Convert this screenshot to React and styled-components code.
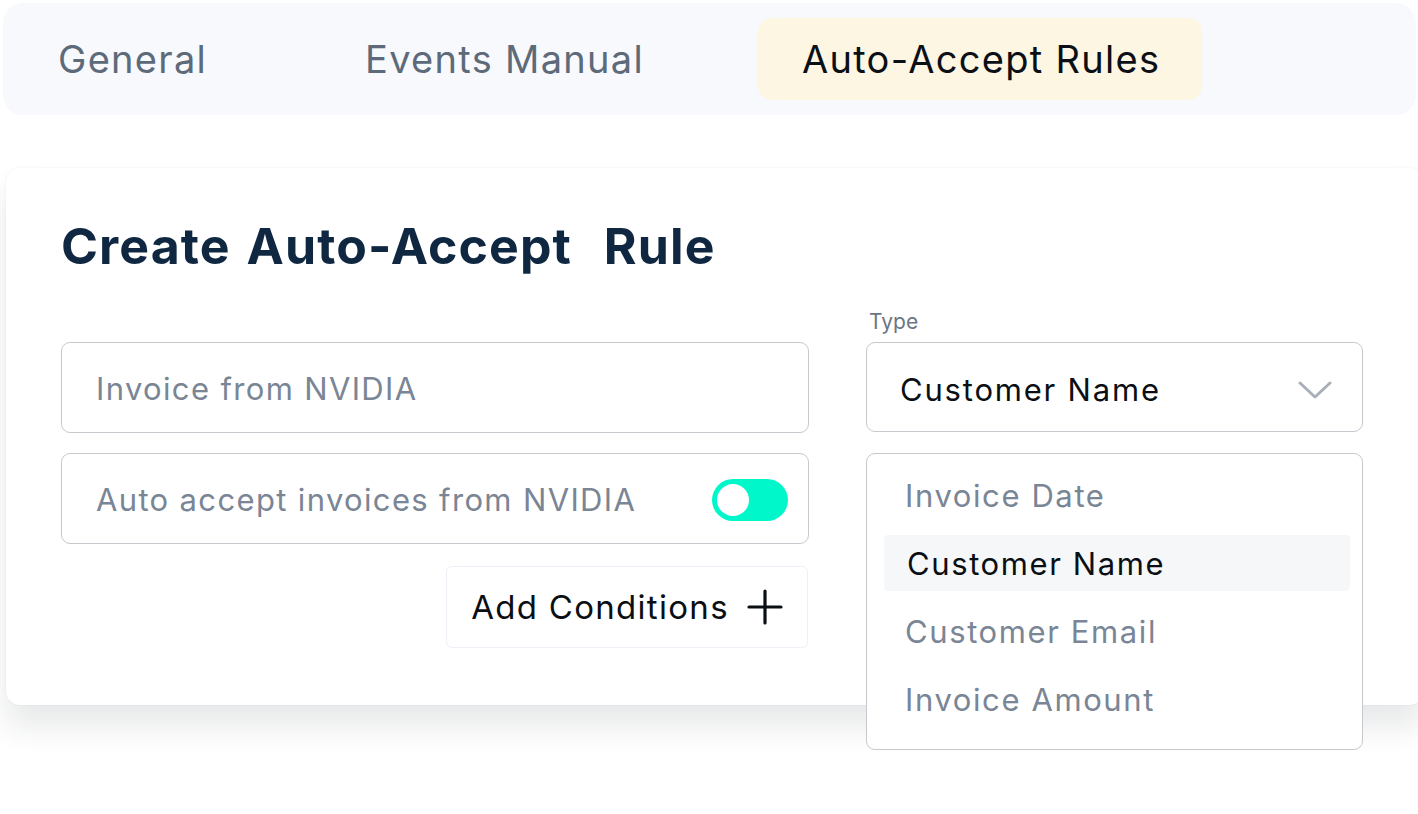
import React from "react";
import styled, { createGlobalStyle } from "styled-components";

const GlobalStyle = createGlobalStyle`
  body {
    margin: 0;
    background: #ffffff;
    font-family: "Inter", "Liberation Sans", sans-serif;
  }
`;

const Page = styled.div`
  width: 1418px;
  height: 814px;
  padding: 3px 0 0 3px;
  box-sizing: border-box;
  overflow: hidden;
`;

const TabBar = styled.div`
  display: flex;
  align-items: center;
  gap: 72px;
  height: 112px;
  padding: 15px 11px;
  box-sizing: border-box;
  background: #f7f9fc;
  border-radius: 20px;
  margin-right: 2px;
`;

const Tab = styled.div`
  height: 82px;
  display: flex;
  align-items: center;
  padding: 0 42px 0 44px;
  border-radius: 14px;
  font-size: 38px;
  letter-spacing: 1.3px;
  color: ${(p) => (p.active ? "#0b1016" : "#5d6a79")};
  background: ${(p) => (p.active ? "#fdf6e3" : "transparent")};
`;

const Card = styled.div`
  margin: 53px -6px 0 3px;
  height: 537px;
  background: #ffffff;
  border-radius: 14px;
  box-shadow: 0 22px 30px rgba(30, 35, 45, 0.1), 0 0 2px rgba(30, 40, 60, 0.08);
  padding: 48px 61px 0 55px;
  box-sizing: border-box;
`;

const Title = styled.h1`
  margin: 0;
  font-size: 50px;
  line-height: 60px;
  font-weight: 700;
  color: #0f2740;
  letter-spacing: 1.1px;
  word-spacing: 3px;
`;

const Form = styled.div`
  display: grid;
  grid-template-columns: 748px 497px;
  column-gap: 57px;
  margin-top: 34px;
`;

const Column = styled.div`
  display: flex;
  flex-direction: column;
  gap: ${(p) => p.gap || 0}px;
  padding-top: ${(p) => p.top || 0}px;
`;

const Field = styled.div`
  height: 91px;
  box-sizing: border-box;
  border: 1.5px solid #c6c9ce;
  border-radius: 9px;
  display: flex;
  align-items: center;
  justify-content: space-between;
  padding: 2px 20px 0 34px;
  font-size: 31px;
  letter-spacing: 1.35px;
  color: #7a8595;
  background: #fff;
`;

const Toggle = styled.div`
  width: 76px;
  height: 42px;
  border-radius: 21px;
  background: #00f7c9;
  position: relative;
  &::after {
    content: "";
    position: absolute;
    left: 5px;
    top: 5px;
    width: 32px;
    height: 32px;
    border-radius: 50%;
    background: #fff;
  }
`;

const AddButton = styled.button`
  align-self: flex-end;
  margin-top: 2px;
  width: 362px;
  height: 82px;
  border: 1.5px solid #eef0f8;
  border-radius: 6px;
  background: #fff;
  display: flex;
  align-items: center;
  justify-content: center;
  gap: 18px;
  font-family: inherit;
  font-size: 33px;
  color: #0b0f14;
  letter-spacing: 1.3px;
  padding: 0;
  margin-right: 1px;
`;

const Label = styled.div`
  font-size: 21px;
  color: #6b7685;
  margin: 0 0 6px 3px;
  line-height: 24px;
`;

const SelectWrap = styled.div`
  position: relative;
  margin-top: 2px;
`;

const Select = styled.div`
  height: 90px;
  box-sizing: border-box;
  border: 1.5px solid #c6c9ce;
  border-radius: 9px;
  display: flex;
  align-items: center;
  justify-content: space-between;
  padding: 5px 30px 0 33px;
  font-size: 31px;
  letter-spacing: 1.8px;
  color: #0b0f14;
`;

const Menu = styled.div`
  position: absolute;
  left: 0;
  right: 0;
  top: 111px;
  height: 297px;
  box-sizing: border-box;
  border: 1.5px solid #c6c9ce;
  border-radius: 9px;
  background: #fff;
  padding: 13px 12px 0 17px;
  display: flex;
  flex-direction: column;
  gap: 12px;
`;

const Option = styled.div`
  height: 56px;
  display: flex;
  align-items: center;
  padding-left: ${(p) => (p.selected ? 23 : 21)}px;
  border-radius: 4px;
  font-size: 31px;
  letter-spacing: 1.6px;
  color: ${(p) => (p.selected ? "#0b0f14" : "#7a8595")};
  background: ${(p) => (p.selected ? "#f6f7f9" : "transparent")};
`;

const Chevron = () => (
  <svg width="34" height="20" viewBox="0 0 34 20" fill="none">
    <path d="M2 3 L17 17 L32 3" stroke="#a9b0ba" strokeWidth="3" strokeLinecap="round" strokeLinejoin="round" />
  </svg>
);

const Plus = () => (
  <svg width="36" height="36" viewBox="0 0 36 36" fill="none">
    <path d="M18 2 V34 M2 18 H34" stroke="#0b0f14" strokeWidth="3.2" strokeLinecap="round" />
  </svg>
);

const options = ["Invoice Date", "Customer Name", "Customer Email", "Invoice Amount"];

export default function App() {
  return (
    <Page>
      <GlobalStyle />
      <TabBar>
        <Tab>General</Tab>
        <Tab>Events Manual</Tab>
        <Tab active>Auto-Accept Rules</Tab>
      </TabBar>
      <Card>
        <Title>Create Auto-Accept&nbsp; Rule</Title>
        <Form>
          <Column gap={20} top={32}>
            <Field>Invoice from NVIDIA</Field>
            <Field>
              Auto accept invoices from NVIDIA
              <Toggle />
            </Field>
            <AddButton>
              Add Conditions <Plus />
            </AddButton>
          </Column>
          <Column>
            <Label>Type</Label>
            <SelectWrap>
              <Select>
                Customer Name
                <Chevron />
              </Select>
              <Menu>
                {options.map((o) => (
                  <Option key={o} selected={o === "Customer Name"}>
                    {o}
                  </Option>
                ))}
              </Menu>
            </SelectWrap>
          </Column>
        </Form>
      </Card>
    </Page>
  );
}
